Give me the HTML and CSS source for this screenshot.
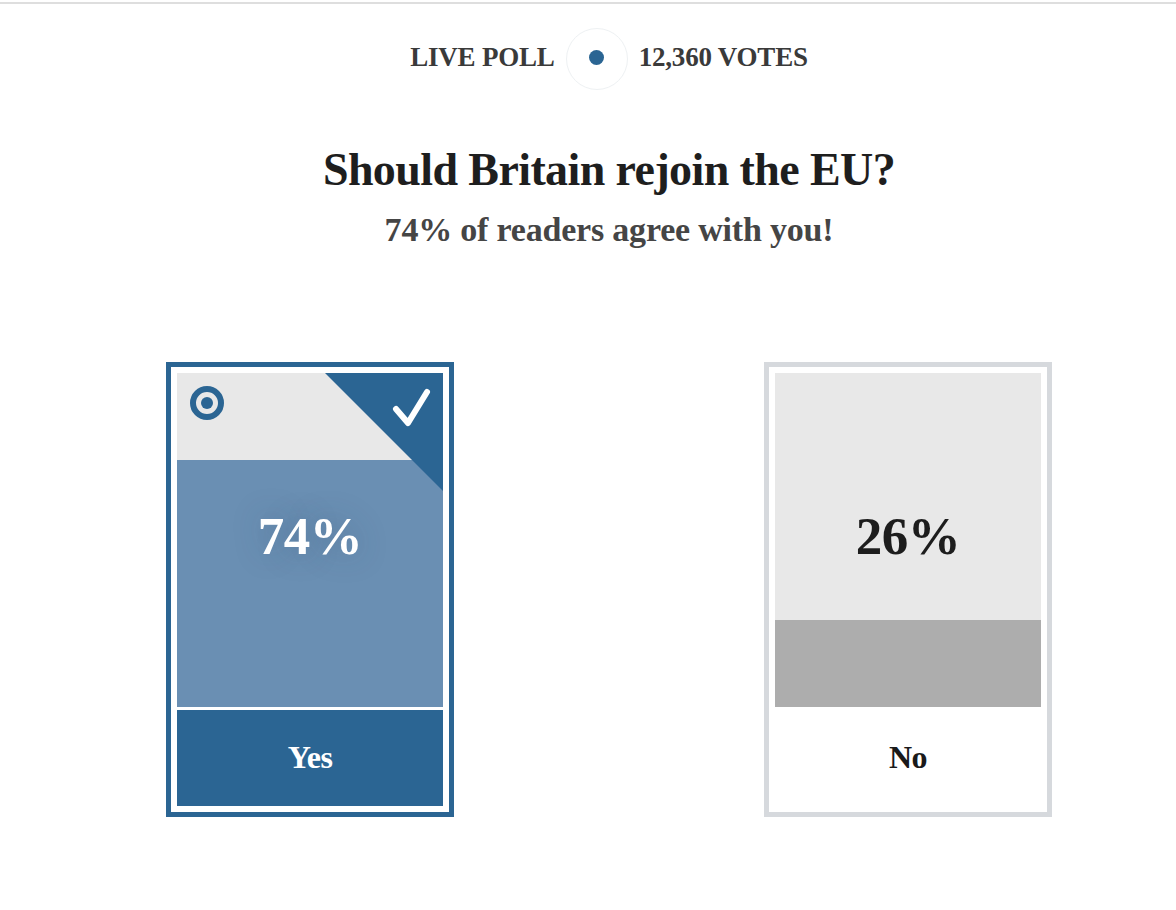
FILE: index.html
```html
<!DOCTYPE html>
<html lang="en">
<head>
    <meta charset="UTF-8">
    <meta name="viewport" content="width=device-width, initial-scale=1.0">
    <title>Live poll</title>
    <link rel="stylesheet" href="styles.css">
</head>
<body>
    <div class="rule"></div>
    <div class="poll">
        <div class="meta">
            <span>LIVE POLL</span>
            <span class="pulse"><span class="dot"></span></span>
            <span>12,360 VOTES</span>
        </div>
        <h1 class="question">Should Britain rejoin the EU?</h1>
        <p class="result">74% of readers agree with you!</p>

        <div class="options">
            <div class="option chosen">
                <div class="bar">
                    <div class="fill" style="height: 74%"></div>
                    <svg class="radio" width="34" height="34" viewBox="0 0 34 34">
                        <circle cx="17" cy="17" r="14" fill="none" stroke="#2b6593" stroke-width="6"/>
                        <circle cx="17" cy="17" r="6" fill="#2b6593"/>
                    </svg>
                    <svg class="corner" width="118" height="118" viewBox="0 0 118 118">
                        <polygon points="0,0 118,0 118,118" fill="#2b6593"/>
                        <path d="M71 36 L83 50 L102 19" fill="none" stroke="#fff" stroke-width="6" stroke-linecap="round" stroke-linejoin="round"/>
                    </svg>
                    <div class="pct">74%</div>
                </div>
                <div class="label">Yes</div>
            </div>
            <div class="option">
                <div class="bar">
                    <div class="fill" style="height: 26%"></div>
                    <div class="pct">26%</div>
                </div>
                <div class="label">No</div>
            </div>
        </div>
    </div>
</body>
</html>
```

FILE: styles.css
```css
body {
    margin: 0;
    background: #fff;
    font-family: "Liberation Serif", "Times New Roman", serif;
    font-weight: bold;
}
.rule {
    margin-top: 2px;
    height: 2px;
    background: #dedede;
}
.poll {
    padding-left: 42px;
    display: flex;
    flex-direction: column;
    align-items: center;
}
.meta {
    margin-top: 24px;
    display: flex;
    align-items: center;
    gap: 11px;
    font-size: 27px;
    letter-spacing: -0.2px;
    color: #3a3a3a;
}
.meta span:first-child,
.meta span:last-child { margin-top: -3px; }
.pulse {
    width: 60px;
    height: 60px;
    border: 1px solid #eef1f3;
    border-radius: 50%;
    display: flex;
    align-items: center;
    justify-content: center;
}
.dot {
    width: 15px;
    height: 15px;
    border-radius: 50%;
    background: #2b6593;
}
.question {
    margin: 53px 0 0;
    font-size: 46px;
    line-height: 54px;
    letter-spacing: -0.6px;
    color: #1e1e1e;
}
.result {
    margin: 13px 0 0;
    font-size: 34px;
    line-height: 40px;
    letter-spacing: -0.2px;
    color: #454545;
}
.options {
    margin-top: 112px;
    display: flex;
    gap: 310px;
}
.option {
    width: 266px;
    padding: 6px;
    border: 5px solid #d6d9dd;
    display: flex;
    flex-direction: column;
    gap: 3px;
}
.option.chosen { border-color: #2b6593; }
.bar {
    height: 334px;
    background: #e8e8e8;
    display: grid;
}
.bar > * { grid-area: 1 / 1; }
.fill {
    align-self: end;
    background: #adadad;
}
.chosen .fill { background: #6a8fb3; }
.radio {
    margin: 13px 0 0 13px;
    align-self: start;
    justify-self: start;
}
.corner {
    align-self: start;
    justify-self: end;
}
.pct {
    align-self: center;
    justify-self: center;
    padding-bottom: 7px;
    font-size: 53px;
    line-height: 1;
    letter-spacing: -0.5px;
    color: #1d1d1d;
}
.chosen .pct {
    color: #fff;
    text-shadow: 0 0 30px rgba(40, 70, 100, 0.35);
}
.label {
    height: 96px;
    padding-bottom: 2px;
    box-sizing: border-box;
    display: flex;
    align-items: center;
    justify-content: center;
    font-size: 32px;
    line-height: 1;
    letter-spacing: -0.5px;
    color: #1a1a1a;
}
.chosen .label {
    background: #2b6593;
    color: #fff;
}
```
